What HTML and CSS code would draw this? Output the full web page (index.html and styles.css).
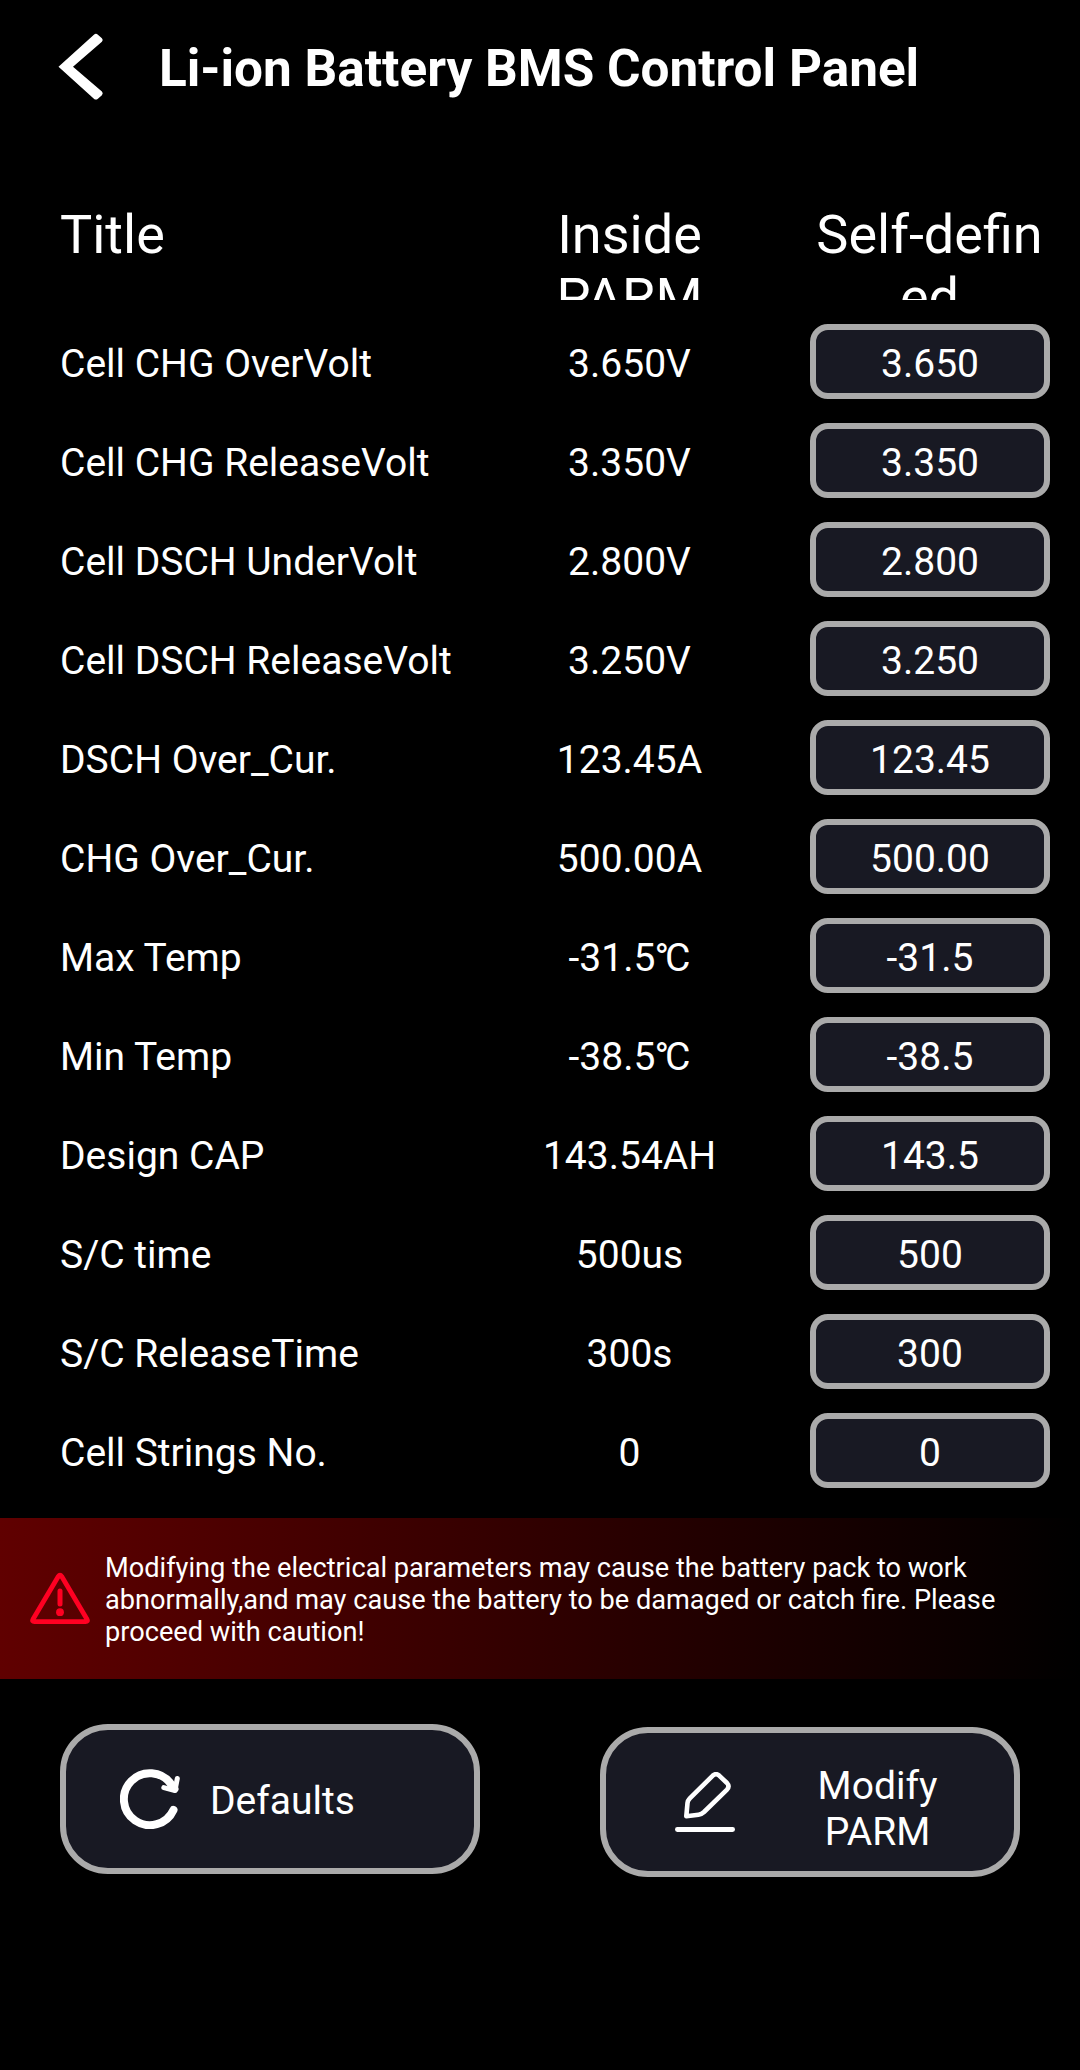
FILE: index.html
```html
<!DOCTYPE html>
<html lang="en">
<head>
<meta charset="utf-8">
<title>Li-ion Battery BMS Control Panel</title>
<link rel="stylesheet" href="styles.css">
</head>
<body>
<header class="topbar">
  <svg class="back" viewBox="0 0 48 70" aria-label="Back"><path d="M2.500 35.700 37.900 3.700q2-1.700 4 0l4 3.500q1.700 1.800 0 3.600L17 35.700 45.900 60.600q1.700 1.800 0 3.600l-4 3.500q-2 1.700-4 0Z" fill="#fff"/></svg>
  <h1 class="heading">Li-ion Battery BMS Control Panel</h1>
</header>
<main>
  <div class="columns">
    <div class="col-title">Title</div>
    <div class="col-head">Inside PARM</div>
    <div class="col-head">Self-defined</div>
  </div>
  <div class="params">
    <div class="param"><span class="name">Cell CHG OverVolt</span><span class="value">3.650V</span><span class="field">3.650</span></div>
    <div class="param"><span class="name">Cell CHG ReleaseVolt</span><span class="value">3.350V</span><span class="field">3.350</span></div>
    <div class="param"><span class="name">Cell DSCH UnderVolt</span><span class="value">2.800V</span><span class="field">2.800</span></div>
    <div class="param"><span class="name">Cell DSCH ReleaseVolt</span><span class="value">3.250V</span><span class="field">3.250</span></div>
    <div class="param"><span class="name">DSCH Over_Cur.</span><span class="value">123.45A</span><span class="field">123.45</span></div>
    <div class="param"><span class="name">CHG Over_Cur.</span><span class="value">500.00A</span><span class="field">500.00</span></div>
    <div class="param"><span class="name">Max Temp</span><span class="value">-31.5<span class="degree">°</span>C</span><span class="field">-31.5</span></div>
    <div class="param"><span class="name">Min Temp</span><span class="value">-38.5<span class="degree">°</span>C</span><span class="field">-38.5</span></div>
    <div class="param"><span class="name">Design CAP</span><span class="value">143.54AH</span><span class="field">143.5</span></div>
    <div class="param"><span class="name">S/C time</span><span class="value">500us</span><span class="field">500</span></div>
    <div class="param"><span class="name">S/C ReleaseTime</span><span class="value">300s</span><span class="field">300</span></div>
    <div class="param"><span class="name">Cell Strings No.</span><span class="value">0</span><span class="field">0</span></div>
  </div>
  <div class="warning">
    <svg class="warning-icon" viewBox="0 0 60 60"><path d="M28.400 7.300Q30 4.900 31.600 7.300L57 50.300Q58.300 52.700 55.500 52.700H4.500Q1.700 52.700 3 50.300Z" fill="none" stroke="#ff0022" stroke-width="4.800" stroke-linejoin="round"/><path d="M30 22V35" stroke="#ff0022" stroke-width="5" stroke-linecap="round"/><circle cx="30" cy="43.200" r="3.900" fill="#ff0022"/></svg>
    <p class="warning-text">Modifying the electrical parameters may cause the battery pack to work abnormally,and may cause the battery to be damaged or catch fire. Please proceed with caution!</p>
  </div>
  <div class="actions">
    <button class="action action-defaults">
      <svg class="action-icon" viewBox="0 0 60 60" fill="none" stroke="#fff" stroke-linecap="round" stroke-linejoin="round"><path d="M53.500 41A26 26 0 1 1 51 15" stroke-width="8"/><path d="M57.300 9.500 55 21.500 43.800 18.600" stroke-width="5"/><path d="M50 14 55 20" stroke-width="7"/></svg>
      <span>Defaults</span>
    </button>
    <button class="action action-modify">
      <svg class="action-icon" viewBox="0 0 60 60" fill="none" stroke="#fff" stroke-linecap="round" stroke-linejoin="round"><path d="M11.300 44.300 12.500 31Q12.800 28.500 14.800 26.400L37.800 3.600Q41 .8 44.200 3.600L52 11Q55 14.200 52 17.600L29 40Q26.500 42.300 23.500 42.700Z" stroke-width="4.600"/><path d="M2.400 57.500H57.600" stroke-width="4.800"/></svg>
      <span class="modify-label">Modify PARM</span>
    </button>
  </div>
</main>
</body>
</html>
```
FILE: styles.css
```css
* {
  box-sizing: border-box;
}

body {
  margin: 0;
  min-height: 2070px;
  background: #000;
  color: #fff;
  font-family: Roboto, "Liberation Sans", sans-serif;
  font-size: 39px;
  line-height: 46px;
}

.topbar {
  display: flex;
  align-items: center;
  height: 203px;
  padding: 0 56px 71px;
}

.back {
  width: 48px;
  height: 70px;
}

.heading {
  margin: 5px 0 0 55px;
  font-size: 51.3px;
  font-weight: 700;
  line-height: 60px;
  white-space: nowrap;
}

.columns,
.param {
  display: grid;
  grid-template-columns: 450px 240px 60px 240px;
  padding-left: 60px;
}

.columns {
  height: 97px;
  overflow: hidden;
  font-size: 54px;
  line-height: 63px;
}

.col-head {
  padding-right: 1px;
  text-align: center;
}

.col-head:last-child,
.field {
  grid-column: 4;
}

.col-head:last-child {
  word-break: break-all;
}

.params {
  padding-top: 12px;
}

.param {
  height: 99px;
  align-items: center;
}

.name,
.value {
  padding-top: 4px;
}

.value {
  padding-right: 1px;
  text-align: center;
}

.degree {
  margin: 0 -4px 0 -1px;
}

.field {
  height: 75px;
  padding-top: 11px;
  border: 6px solid #aaa;
  border-radius: 18px;
  background: #181923;
  text-align: center;
}

.warning {
  display: flex;
  align-items: center;
  height: 161px;
  margin-top: 18px;
  padding-left: 30px;
  background: linear-gradient(90deg, #600000, #000);
}

.warning-icon {
  width: 60px;
  height: 60px;
}

.warning-text {
  width: 930px;
  margin: 2px 0 0 15px;
  font-size: 27.18px;
  line-height: 32px;
}

.actions {
  display: flex;
  gap: 120px;
  padding: 45px 60px 0;
}

.action {
  display: flex;
  align-items: center;
  width: 420px;
  height: 150px;
  border: 6px solid #aaa;
  border-radius: 48px;
  background: #181923;
  color: #fff;
  font: inherit;
}

.action-icon {
  flex: none;
  width: 60px;
  height: 60px;
}

.action-defaults {
  gap: 30px;
  padding: 0 54px;
}

.action-defaults span {
  padding-top: 4px;
}

.action-modify {
  gap: 75px;
  margin-top: 3px;
  padding: 0 69px;
}

.modify-label {
  width: 136px;
  padding-top: 14px;
  text-align: center;
}
```
